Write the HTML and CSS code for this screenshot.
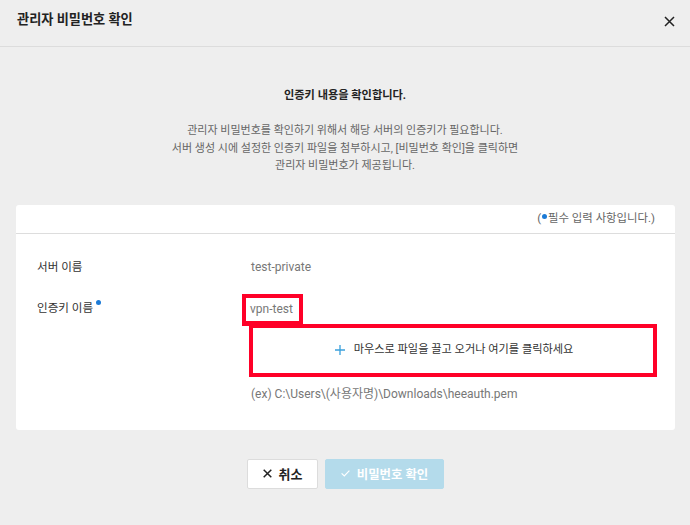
FILE: index.html
```html
<!DOCTYPE html>
<html lang="ko">
<head>
<meta charset="utf-8">
<link rel="stylesheet" href="styles.css">
</head>
<body>
<div class="modal">
  <div class="header">
    <div class="title">관리자 비밀번호 확인</div>
    <button class="close" aria-label="닫기">
      <svg width="11" height="11" viewBox="0 0 11 11"><path d="M1 1L10 10M10 1L1 10" stroke="#222" stroke-width="1.5" fill="none"/></svg>
    </button>
  </div>
  <div class="intro">
    <div class="intro-title">인증키 내용을 확인합니다.</div>
    <p class="intro-desc">관리자 비밀번호를 확인하기 위해서 해당 서버의 인증키가 필요합니다.<br>서버 생성 시에 설정한 인증키 파일을 첨부하시고, [비밀번호 확인]을 클릭하면<br>관리자 비밀번호가 제공됩니다.</p>
  </div>
  <div class="card">
    <div class="card-head">(<span class="dot"></span>필수 입력 사항입니다.)</div>
    <div class="card-body">
      <div class="row">
        <div class="label">서버 이름</div>
        <div class="value">test-private</div>
      </div>
      <div class="row row-key">
        <div class="label">인증키 이름<span class="dot dot-up"></span></div>
        <div class="value-col">
          <span class="key-name">vpn-test</span>
          <div class="drop">
            <span class="plus">
              <svg width="10" height="10" viewBox="0 0 10 10"><path d="M5 0V10M0 5H10" stroke="#3aa0dc" stroke-width="1.3" fill="none"/></svg>
            </span>
            <span class="drop-text">마우스로 파일을 끌고 오거나 여기를 클릭하세요</span>
          </div>
          <div class="hint">(ex) C:\Users\(사용자명)\Downloads\heeauth.pem</div>
        </div>
      </div>
    </div>
  </div>
  <div class="actions">
    <button class="btn btn-cancel">
      <svg width="9" height="9" viewBox="0 0 9 9"><path d="M0.7 0.7L8.3 8.3M8.3 0.7L0.7 8.3" stroke="#222" stroke-width="1.5" fill="none"/></svg>
      취소
    </button>
    <button class="btn btn-ok">
      <svg width="9" height="7" viewBox="0 0 9 7"><path d="M0.6 3.4L3.3 6L8.4 0.6" stroke="#fff" stroke-width="1.2" fill="none"/></svg>
      비밀번호 확인
    </button>
  </div>
</div>
</body>
</html>
```

FILE: styles.css
```css
* { box-sizing: border-box; }
html, body { margin: 0; padding: 0; }
body {
  background: #eeeeee;
  font-family: Roboto, "Noto Sans CJK KR", sans-serif;
  color: #333;
  width: 690px;
  height: 525px;
  overflow: hidden;
}
.header {
  height: 47px;
  display: flex;
  align-items: flex-start;
  justify-content: space-between;
  padding: 10px 15px 0 17px;
  border-bottom: 1px solid #dcdcdc;
}
.title {
  font-size: 13.2px;
  font-weight: bold;
  color: #222;
  line-height: 20px;
}
.close {
  border: 0;
  background: transparent;
  padding: 0;
  margin-top: 6px;
  width: 11px;
  height: 11px;
  display: flex;
}
.intro {
  text-align: center;
  padding-top: 39px;
}
.intro-title {
  font-size: 11.2px;
  font-weight: bold;
  color: #222;
  line-height: 20px;
}
.intro-desc {
  margin: 16px 0 0;
  font-size: 11px;
  color: #666;
  line-height: 17.6px;
}
.card {
  margin: 30px 15px 0 16px;
  background: #fff;
  border-radius: 3px;
  height: 225px;
}
.card-head {
  height: 29px;
  border-bottom: 1px solid #dddddd;
  text-align: right;
  padding-right: 20px;
  font-size: 11.4px;
  color: #666;
  line-height: 27px;
}
.dot {
  display: inline-block;
  width: 5px;
  height: 5px;
  border-radius: 50%;
  background: #1b7ad6;
  vertical-align: 3px;
  margin: 0 1px 0 1px;
}
.dot-up { vertical-align: 7px; margin-left: 3px; }
.card-body {
  padding: 24px 21px 0 21px;
}
.row {
  display: flex;
  font-size: 12px;
  line-height: 18px;
}
.label {
  width: 214px;
  flex-shrink: 0;
  color: #333;
  font-size: 11.6px;
}
.value { color: #777; }
.row-key { margin-top: 23px; }
.value-col {
  display: flex;
  flex-direction: column;
  align-items: flex-start;
  margin-top: -5px;
}
.key-name {
  color: #777;
  border: 4px solid #ff0028;
  border-bottom-width: 5px;
  padding: 2px 6px 3px 4px;
  line-height: 18px;
  margin-left: -9px;
}
.drop {
  width: 408px;
  height: 53px;
  margin-top: -2px;
  margin-left: -2px;
  border: 4px solid #ff0028;
  display: flex;
  align-items: center;
  justify-content: center;
  gap: 9px;
  color: #333;
  font-size: 11.2px;
  padding-left: 2px;
}
.plus { display: flex; }
.hint {
  margin-top: 8px;
  color: #777;
  font-size: 12px;
  line-height: 18px;
}
.actions {
  display: flex;
  justify-content: center;
  gap: 7px;
  margin-top: 29px;
  padding-left: 1px;
}
.btn {
  height: 30px;
  border-radius: 2px;
  font-family: Roboto, "Noto Sans CJK KR", sans-serif;
  font-size: 12.4px;
  font-weight: bold;
  display: flex;
  align-items: center;
  justify-content: center;
  gap: 7px;
  padding: 0;
}
.btn-cancel {
  width: 71px;
  background: #fff;
  border: 1px solid #dcdcdc;
  color: #222;
  font-size: 13px;
}
.btn-ok {
  width: 119px;
  background: #b4dbeb;
  border: 1px solid #b4dbeb;
  color: #fff;
}
```
